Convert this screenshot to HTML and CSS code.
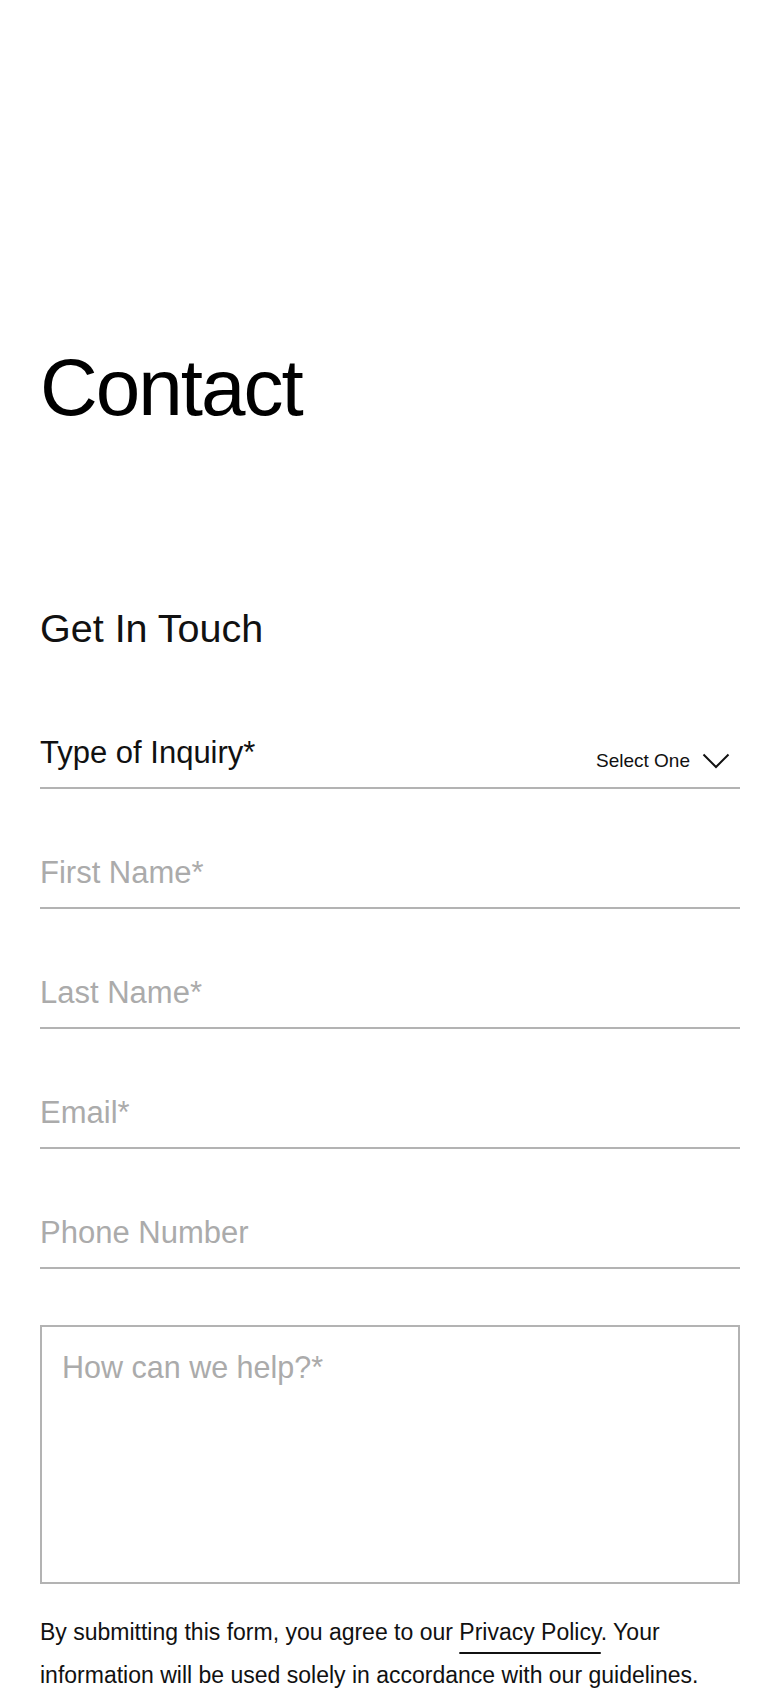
FILE: index.html
```html
<!DOCTYPE html>
<html lang="en">
<head>
    <meta charset="UTF-8">
    <meta name="viewport" content="width=device-width, initial-scale=1.0">
    <title>Contact</title>
    <link rel="stylesheet" href="styles.css">
</head>
<body>
    <main class="page">
        <h1 class="page-title">Contact</h1>

        <section class="contact">
            <h2 class="contact-title">Get In Touch</h2>

            <form class="contact-form" onsubmit="return false">
                <!-- Inquiry type dropdown -->
                <div class="field field-select">
                    <span class="field-label">Type of Inquiry*</span>
                    <span class="select-value">
                        Select One
                        <svg class="chevron" width="28" height="16" viewBox="0 0 28 16" aria-hidden="true">
                            <polyline points="1.5,1.5 14,14 26.5,1.5" fill="none" stroke="#111" stroke-width="2"/>
                        </svg>
                    </span>
                </div>

                <div class="field">
                    <input type="text" class="field-input" placeholder="First Name*">
                </div>
                <div class="field">
                    <input type="text" class="field-input" placeholder="Last Name*">
                </div>
                <div class="field">
                    <input type="email" class="field-input" placeholder="Email*">
                </div>
                <div class="field">
                    <input type="tel" class="field-input" placeholder="Phone Number">
                </div>

                <textarea class="message" placeholder="How can we help?*"></textarea>

                <p class="disclaimer">By submitting this form, you agree to our <a href="#" class="policy-link">Privacy Policy</a>. Your information will be used solely in accordance with our guidelines.</p>
            </form>
        </section>
    </main>
</body>
</html>
```

FILE: styles.css
```css
body {
    margin: 0;
    background-color: #fff;
    color: #111;
    font-family: "Liberation Sans", Arial, sans-serif;
}

.page {
    padding: 338px 40px 0;
}

/* Page heading */
.page-title {
    margin: 0;
    font-size: 80px;
    font-weight: normal;
    line-height: 100px;
    letter-spacing: -2px;
    color: #000;
}

.contact-title {
    margin: 166px 0 0;
    font-size: 39.5px;
    font-weight: normal;
    line-height: 48px;
}

/* Form */
.contact-form {
    padding-top: 17px;
}

.field {
    display: flex;
    justify-content: space-between;
    align-items: flex-end;
    margin-top: 64px;
    padding-bottom: 14px;
    border-bottom: 2px solid #b3b3b3;
}

.field-label {
    font-size: 31px;
    line-height: 40px;
}

.select-value {
    display: flex;
    align-items: center;
    gap: 12px;
    padding-right: 10px;
    font-size: 19px;
    line-height: 24px;
}

.chevron {
    display: block;
}

.field-input {
    width: 100%;
    height: 40px;
    padding: 0;
    border: none;
    outline: none;
    background: none;
    font-family: inherit;
    font-size: 31px;
    line-height: 40px;
    color: #111;
}

.field-input::placeholder,
.message::placeholder {
    color: #ababab;
    opacity: 1;
}

.message {
    display: block;
    box-sizing: border-box;
    width: 100%;
    height: 259px;
    margin-top: 56px;
    padding: 20px;
    border: 2px solid #b3b3b3;
    border-radius: 0;
    outline: none;
    resize: none;
    font-family: inherit;
    font-size: 30.5px;
    line-height: 40px;
    color: #111;
}

.disclaimer {
    margin: 27px 0 0;
    font-size: 23px;
    line-height: 43px;
}

.policy-link {
    color: #111;
    text-decoration: underline;
    text-decoration-thickness: 2px;
    text-underline-offset: 12px;
}
```
